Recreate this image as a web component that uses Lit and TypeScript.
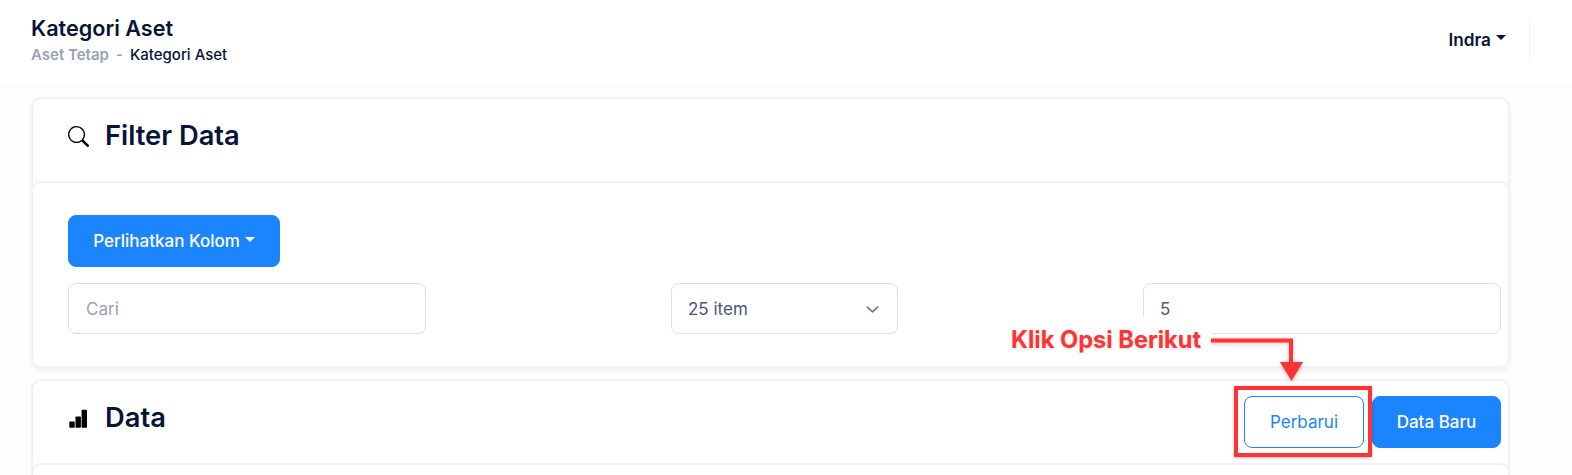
import { LitElement, html, css } from 'lit';
import { customElement } from 'lit/decorators.js';

@customElement('app-root')
export class AppRoot extends LitElement {
  static styles = css`
    :host {
      display: block;
      position: relative;
      height: 475px;
      overflow: hidden;
      background: #fdfdfd;
      font-family: Inter, 'Liberation Sans', sans-serif;
      color: #071437;
    }
    .topbar {
      height: 84px;
      box-sizing: border-box;
      background: #fff;
      box-shadow: 0 2px 6px rgba(0, 0, 0, 0.015);
      display: flex;
      align-items: center;
      justify-content: space-between;
      padding: 0 42px 0 31px;
    }
    .page-title {
      font-size: 21.6px;
      font-weight: 600;
      line-height: 24px;
      margin: 0 0 6px;
    }
    .crumbs {
      display: flex;
      align-items: center;
      gap: 7px;
      font-size: 15px;
      font-weight: 500;
      line-height: 18px;
      margin-bottom: 4px;
    }
    .crumbs .muted { color: #99a1b7; font-weight: 600; }
    .user {
      display: flex;
      align-items: center;
      align-self: flex-start;
      height: 42px;
      margin-top: 18px;
      padding-right: 23px;
      border-right: 1px solid #f1f1f4;
      font-size: 17.2px;
      font-weight: 600;
    }
    .caret {
      display: inline-block;
      width: 0;
      height: 0;
      margin-left: 5px;
      margin-top: -3px;
      border-left: 5px solid transparent;
      border-right: 5px solid transparent;
      border-top: 5px solid currentColor;
    }
    .content {
      padding: 13px 62px 0 31px;
    }
    .card {
      background: #fff;
      border: 2px solid #f1f1f4;
      border-radius: 10px;
      box-sizing: border-box;
    }
    .card-head {
      display: flex;
      align-items: center;
      justify-content: space-between;
      height: 82px;
      padding: 0 7px 0 35px;
      box-sizing: border-box;
    }
    .card-title {
      display: flex;
      align-items: center;
      gap: 16px;
      margin: 0 0 8px;
      font-size: 27.3px;
      font-weight: 600;
      line-height: 32px;
    }
    .card-title svg { display: block; color: #000; }
    .filter { box-shadow: 0 3px 5px rgba(0, 0, 0, 0.05); }
    .filter-body {
      margin: 0 -2px -2px;
      padding: 32px 7px 32px 35px;
      border: 2px solid #f1f1f4;
      border-radius: 10px;
      background: #fff;
    }
    .btn {
      display: inline-flex;
      align-items: center;
      justify-content: center;
      box-sizing: border-box;
      height: 52px;
      border: 1px solid #1b84ff;
      border-radius: 8px;
      background: #1b84ff;
      color: #fff;
      font: 500 17px Inter, 'Liberation Sans', sans-serif;
    }
    .btn.columns { width: 212px; }
    .btn.outline {
      width: 120px;
      background: #fff;
      color: #1b84ff;
      font-weight: 400;
    }
    .btn.new { width: 129px; }
    .actions { display: flex; gap: 8px; }
    .fields {
      display: flex;
      justify-content: space-between;
      margin-top: 16px;
    }
    .field {
      box-sizing: border-box;
      height: 51px;
      border: 1px solid #dbdfe9;
      border-radius: 8px;
      background: #fff;
      padding: 1px 16px 0;
      font: 400 17px Inter, 'Liberation Sans', sans-serif;
      color: #4b5675;
      outline: none;
    }
    .field::placeholder { color: #99a1b7; }
    .wide { width: 358px; }
    .search { padding-left: 17px; }
    .select {
      width: 227px;
      display: flex;
      align-items: center;
      justify-content: space-between;
    }
    .select svg { display: block; margin-right: 1px; }
    .data-card { margin-top: 11px; }
    .data-body {
      height: 40px;
      margin: 0 -2px;
      border: 2px solid #f1f1f4;
      border-radius: 10px;
      background: #fff;
    }
    /* tutorial callout drawn on top of the screenshot */
    .note-mask {
      position: absolute;
      left: 1003px;
      top: 316px;
      width: 208px;
      height: 40px;
      background: #fff;
    }
    .note-text {
      position: absolute;
      left: 1011px;
      top: 326px;
      color: #ff3333;
      font-size: 23.6px;
      font-weight: 700;
      line-height: 28px;
      white-space: nowrap;
      text-shadow: 0 1px 3px rgba(0, 0, 0, 0.12);
    }
    .note-arrow {
      position: absolute;
      left: 1208px;
      top: 334px;
      overflow: visible;
      filter: drop-shadow(0 1px 2px rgba(0, 0, 0, 0.25));
    }
    .note-box {
      position: absolute;
      left: 1234px;
      top: 386px;
      width: 138px;
      height: 71px;
      box-sizing: border-box;
      border: 4px solid #ff3333;
      box-shadow: 0 1px 3px rgba(0, 0, 0, 0.25);
    }
  `;

  render() {
    return html`
      <header class="topbar">
        <div>
          <h1 class="page-title">Kategori Aset</h1>
          <div class="crumbs">
            <span class="muted">Aset Tetap</span>
            <span class="muted">-</span>
            <span>Kategori Aset</span>
          </div>
        </div>
        <div class="user">Indra<span class="caret"></span></div>
      </header>
      <main class="content">
        <section class="card filter">
          <div class="card-head">
            <h2 class="card-title">
              <svg width="21" height="21" viewBox="0 0 16 16" fill="currentColor">
                <path d="M11.742 10.344a6.5 6.5 0 1 0-1.397 1.398h-.001c.03.04.062.078.098.115l3.85 3.85a1 1 0 0 0 1.415-1.414l-3.85-3.85a1.007 1.007 0 0 0-.115-.1zM12 6.5a5.5 5.5 0 1 1-11 0 5.5 5.5 0 0 1 11 0z" />
              </svg>
              Filter Data
            </h2>
          </div>
          <div class="filter-body">
            <button class="btn columns">Perlihatkan Kolom<span class="caret"></span></button>
            <div class="fields">
              <input class="field wide search" placeholder="Cari" />
              <div class="field select">
                25 item
                <svg width="15" height="15" viewBox="0 0 16 16" fill="none" stroke="#6b7490" stroke-width="1.8" stroke-linecap="round" stroke-linejoin="round">
                  <path d="M2.5 5.5 8 10.5 13.5 5.5" />
                </svg>
              </div>
              <input class="field wide" value="5" />
            </div>
          </div>
        </section>
        <section class="card data-card">
          <div class="card-head">
            <h2 class="card-title">
              <svg width="21" height="21" viewBox="0 0 21 21" fill="currentColor">
                <rect x="1.3" y="13.5" width="5.4" height="6.3" rx="0.8" />
                <rect x="7.5" y="8.5" width="5.4" height="11.3" rx="0.8" />
                <rect x="13.6" y="1.8" width="5.4" height="18" rx="0.8" />
              </svg>
              Data
            </h2>
            <div class="actions">
              <button class="btn outline">Perbarui</button>
              <button class="btn new">Data Baru</button>
            </div>
          </div>
          <div class="data-body"></div>
        </section>
      </main>
      <div class="note-mask"></div>
      <div class="note-text">Klik Opsi Berikut</div>
      <svg class="note-arrow" width="100" height="50" viewBox="0 0 100 50">
        <path d="M3 6.5H83V30" fill="none" stroke="#ff3333" stroke-width="4" />
        <path d="M72 28H95L83.5 47Z" fill="#ff3333" />
      </svg>
      <div class="note-box"></div>
    `;
  }
}
